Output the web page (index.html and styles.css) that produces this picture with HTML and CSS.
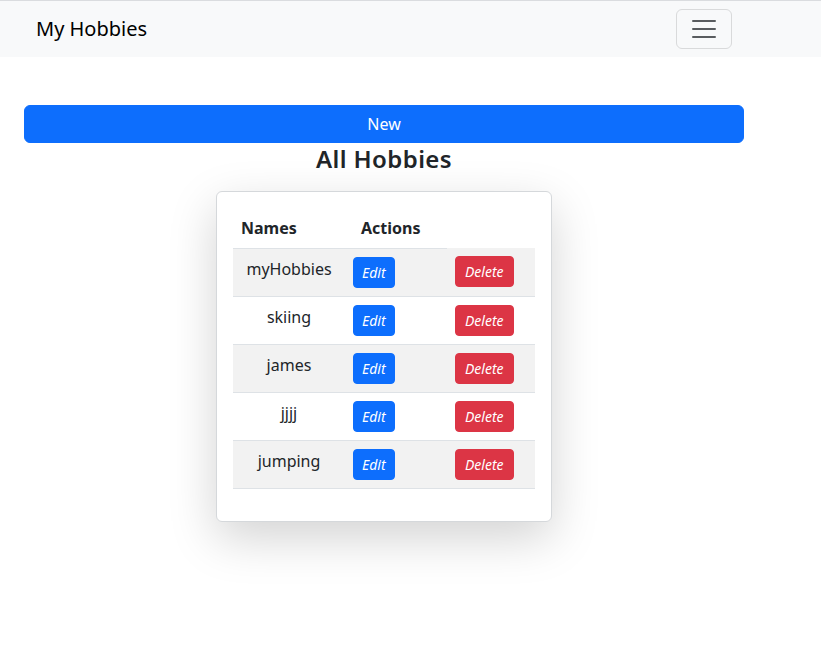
FILE: index.html
```html
<!DOCTYPE html>
<html lang="en">
<head>
<meta charset="utf-8">
<title>My Hobbies</title>
<link rel="stylesheet" href="styles.css">
</head>
<body>
<nav class="navbar">
  <div class="container nav-inner">
    <a class="brand" href="#">My Hobbies</a>
    <button class="toggler" type="button" aria-label="Toggle navigation">
      <svg class="toggler-icon" width="30" height="30" viewBox="0 0 30 30" aria-hidden="true">
        <path d="M4 7h22M4 15h22M4 23h22" stroke="#595c5f" stroke-width="2" stroke-linecap="round" fill="none"/>
      </svg>
    </button>
  </div>
</nav>
<main class="container main">
  <button class="btn btn-new" type="button">New</button>
  <h2 class="title">All Hobbies</h2>
  <div class="card">
    <div class="card-body">
      <table class="table">
        <colgroup><col class="c1"><col class="c2"><col class="c3"></colgroup>
        <thead>
          <tr><th class="th-names">Names</th><th class="th-actions">Actions</th></tr>
        </thead>
        <tbody>
          <tr><td class="name">myHobbies</td><td><button class="btn btn-sm btn-edit">Edit</button></td><td><button class="btn btn-sm btn-delete">Delete</button></td></tr>
          <tr><td class="name">skiing</td><td><button class="btn btn-sm btn-edit">Edit</button></td><td><button class="btn btn-sm btn-delete">Delete</button></td></tr>
          <tr><td class="name">james</td><td><button class="btn btn-sm btn-edit">Edit</button></td><td><button class="btn btn-sm btn-delete">Delete</button></td></tr>
          <tr><td class="name">jjjj</td><td><button class="btn btn-sm btn-edit">Edit</button></td><td><button class="btn btn-sm btn-delete">Delete</button></td></tr>
          <tr><td class="name">jumping</td><td><button class="btn btn-sm btn-edit">Edit</button></td><td><button class="btn btn-sm btn-delete">Delete</button></td></tr>
        </tbody>
      </table>
    </div>
  </div>
</main>
</body>
</html>
```

FILE: styles.css
```css
* { box-sizing: border-box; }

html, body {
  margin: 0;
  padding: 0;
  background: #fff;
}

body {
  font-family: "Noto Sans", "Open Sans", sans-serif;
  font-size: 16px;
  line-height: 1.5;
  color: #212529;
  border-top: 1px solid #dadcdf;
  min-height: 100vh;
}

.container {
  width: 720px;
  margin-left: 24px;
  padding: 0 12px;
}

.navbar {
  background: #f8f9fa;
  padding: 8px 0;
}

.nav-inner {
  display: flex;
  align-items: center;
  justify-content: space-between;
}

.brand {
  font-size: 20px;
  line-height: 30px;
  padding: 5px 0;
  color: #000;
  text-decoration: none;
}

.toggler {
  display: flex;
  align-items: center;
  justify-content: center;
  width: 56px;
  height: 40px;
  padding: 4px 12px;
  background: transparent;
  border: 1px solid #d9dadb;
  border-radius: 6px;
}

.toggler-icon { display: block; }

.main {
  margin-top: 48px;
  padding: 0 0 80px;
  display: flex;
  flex-direction: column;
  align-items: center;
}

.btn {
  font-family: inherit;
  border: 1px solid transparent;
  color: #fff;
  cursor: pointer;
}

.btn-new {
  width: 100%;
  height: 38px;
  background: #0d6efd;
  border-color: #0d6efd;
  border-radius: 6px;
  font-size: 16px;
  line-height: 24px;
  padding: 6px 12px;
}

.title {
  font-size: 24px;
  font-weight: 600;
  line-height: 1.2;
  letter-spacing: 0.4px;
  margin: 2px 0 17px;
}

.card {
  border: 1px solid #d5d8db;
  border-radius: 6px;
  background: #fff;
  box-shadow: 0 16px 48px rgba(0, 0, 0, 0.175);
}

.card-body {
  padding: 16px;
}

.table {
  width: 302px;
  table-layout: fixed;
  border-collapse: collapse;
  margin-bottom: 16px;
}

.c1 { width: 112px; }
.c2 { width: 102px; }
.c3 { width: 88px; }

.table th {
  text-align: left;
  font-weight: 700;
  padding: 8px;
  border-bottom: 1px solid #dee2e6;
  vertical-align: bottom;
}

.table th.th-actions { padding-left: 16px; }

.table td {
  padding: 8px;
  border-bottom: 1px solid #dee2e6;
  vertical-align: top;
  text-align: left;
}

.table td.name { text-align: center; }

.table tbody tr:nth-child(odd) td { background: #f2f2f2; }

.btn-sm {
  font-size: 14px;
  line-height: 21px;
  padding: 4px 8px;
  border-radius: 4px;
  font-style: italic;
}

.btn-edit {
  background: #0d6efd;
  border-color: #0d6efd;
}

.btn-delete {
  background: #dc3545;
  border-color: #dc3545;
  padding: 4px 9px;
}
```
